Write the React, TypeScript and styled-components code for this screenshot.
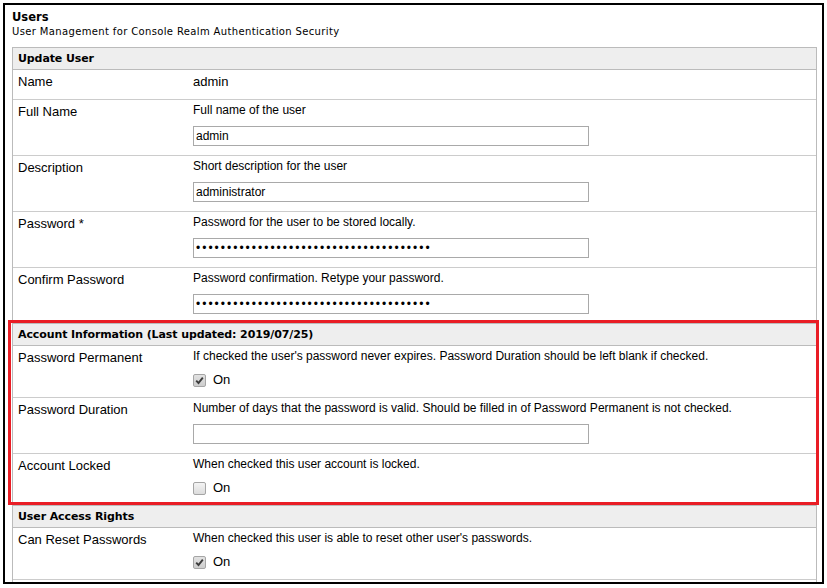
import React from 'react';
import styled, { createGlobalStyle } from 'styled-components';

const Global = createGlobalStyle`
  html, body { margin: 0; padding: 0; background: #fff; }
  body { font-family: "Liberation Sans", Arial, sans-serif; color: #000; }
`;

const Frame = styled.div`
  box-sizing: border-box;
  margin: 3px 0 0 3px;
  width: 821px;
  height: 581px;
  border: 2px solid #000;
  padding: 4px 5px 0 7px;
  overflow: hidden;
  background: #fff;
`;

const Title = styled.div`
  font-family: "DejaVu Sans", Verdana, sans-serif;
  font-weight: bold;
  font-size: 11.5px;
  line-height: 16px;
`;

const Subtitle = styled.div`
  font-family: "DejaVu Sans", Verdana, sans-serif;
  font-size: 10px;
  letter-spacing: 0.36px;
  line-height: 13px;
  white-space: nowrap;
`;

const Table = styled.div`
  margin-top: 9px;
  border-left: 1px solid #bbb;
  border-right: 1px solid #bbb;
`;

const Section = styled.div`
  position: relative;
`;

const Highlight = styled.div`
  position: absolute;
  top: -3px;
  left: -5px;
  right: -3px;
  bottom: 0;
  border: 3px solid #e91d25;
  pointer-events: none;
`;

const SectionHeader = styled.div`
  background: #eee;
  border-top: 1px solid #bbb;
  border-bottom: 1px solid #bbb;
  height: 21px;
  line-height: 21px;
  padding-left: 5px;
  font-family: "DejaVu Sans", Verdana, sans-serif;
  font-weight: bold;
  font-size: 11px;
  letter-spacing: -0.1px;
  white-space: nowrap;
`;

const Row = styled.div`
  display: grid;
  grid-template-columns: 180px 1fr;
  padding: 4px 0 9px;
  & + & {
    border-top: 1px solid #ccc;
  }
`;

const Label = styled.div`
  padding-left: 5px;
  font-size: 13px;
  line-height: 16px;
`;

const Value = styled.div`
  display: flex;
  flex-direction: column;
  align-items: flex-start;
`;

const PlainValue = styled.div`
  font-size: 13px;
  line-height: 16px;
`;

const Help = styled.div`
  font-size: 12px;
  line-height: 13px;
  margin-bottom: 9px;
  white-space: nowrap;
`;

const TextInput = styled.input`
  box-sizing: border-box;
  width: 396px;
  height: 20px;
  margin: 0;
  padding: 0 2px;
  border: 1px solid #a9a9a9;
  border-radius: 0;
  font-family: "Liberation Sans", Arial, sans-serif;
  font-size: 12px;
  color: #000;
  background: #fff;
  outline: none;
  &[type='password'] {
    letter-spacing: 2px;
    padding-left: 2px;
  }
`;

const CheckLine = styled.label`
  display: flex;
  align-items: center;
  height: 16px;
  font-size: 13px;
  line-height: 16px;
`;

const Box = styled.span<{ $checked: boolean }>`
  box-sizing: border-box;
  display: inline-flex;
  align-items: center;
  justify-content: center;
  width: 13px;
  height: 13px;
  margin-right: 7px;
  border: 1px solid #a5a5a5;
  border-radius: 2px;
  background: ${(p) =>
    p.$checked ? 'linear-gradient(#e2e2e2, #cdcdcd)' : 'linear-gradient(#f4f4f4, #dcdcdc)'};
`;

function Check({ checked }: { checked: boolean }) {
  return (
    <CheckLine>
      <Box $checked={checked}>
        {checked && (
          <svg width="9" height="9" viewBox="0 0 9 9">
            <path d="M1.2 4.6 L3.5 7 L7.8 1.6" fill="none" stroke="#3c3c3c" strokeWidth="1.9" />
          </svg>
        )}
      </Box>
      On
    </CheckLine>
  );
}

const DOTS = 'x'.repeat(38);

function InputRow({ label, help, value, password }: { label: string; help: string; value: string; password?: boolean }) {
  return (
    <Row>
      <Label>{label}</Label>
      <Value>
        <Help>{help}</Help>
        <TextInput type={password ? 'password' : 'text'} defaultValue={value} readOnly />
      </Value>
    </Row>
  );
}

function CheckRow({ label, help, checked }: { label: string; help: string; checked: boolean }) {
  return (
    <Row>
      <Label>{label}</Label>
      <Value>
        <Help>{help}</Help>
        <Check checked={checked} />
      </Value>
    </Row>
  );
}

export default function App() {
  return (
    <>
      <Global />
      <Frame>
        <Title>Users</Title>
        <Subtitle>User Management for Console Realm Authentication Security</Subtitle>
        <Table>
          <Section>
            <SectionHeader>Update User</SectionHeader>
            <Row>
              <Label>Name</Label>
              <PlainValue>admin</PlainValue>
            </Row>
            <InputRow label="Full Name" help="Full name of the user" value="admin" />
            <InputRow label="Description" help="Short description for the user" value="administrator" />
            <InputRow label="Password *" help="Password for the user to be stored locally." value={DOTS} password />
            <InputRow
              label="Confirm Password"
              help="Password confirmation. Retype your password."
              value={DOTS}
              password
            />
          </Section>
          <Section>
            <SectionHeader>Account Information (Last updated: 2019/07/25)</SectionHeader>
            <CheckRow
              label="Password Permanent"
              help="If checked the user's password never expires. Password Duration should be left blank if checked."
              checked
            />
            <InputRow
              label="Password Duration"
              help="Number of days that the password is valid. Should be filled in of Password Permanent is not checked."
              value=""
            />
            <CheckRow label="Account Locked" help="When checked this user account is locked." checked={false} />
            <Highlight />
          </Section>
          <Section>
            <SectionHeader>User Access Rights</SectionHeader>
            <CheckRow
              label="Can Reset Passwords"
              help="When checked this user is able to reset other user's passwords."
              checked
            />
            <Row>
              <Label />
              <Value />
            </Row>
          </Section>
        </Table>
      </Frame>
    </>
  );
}
